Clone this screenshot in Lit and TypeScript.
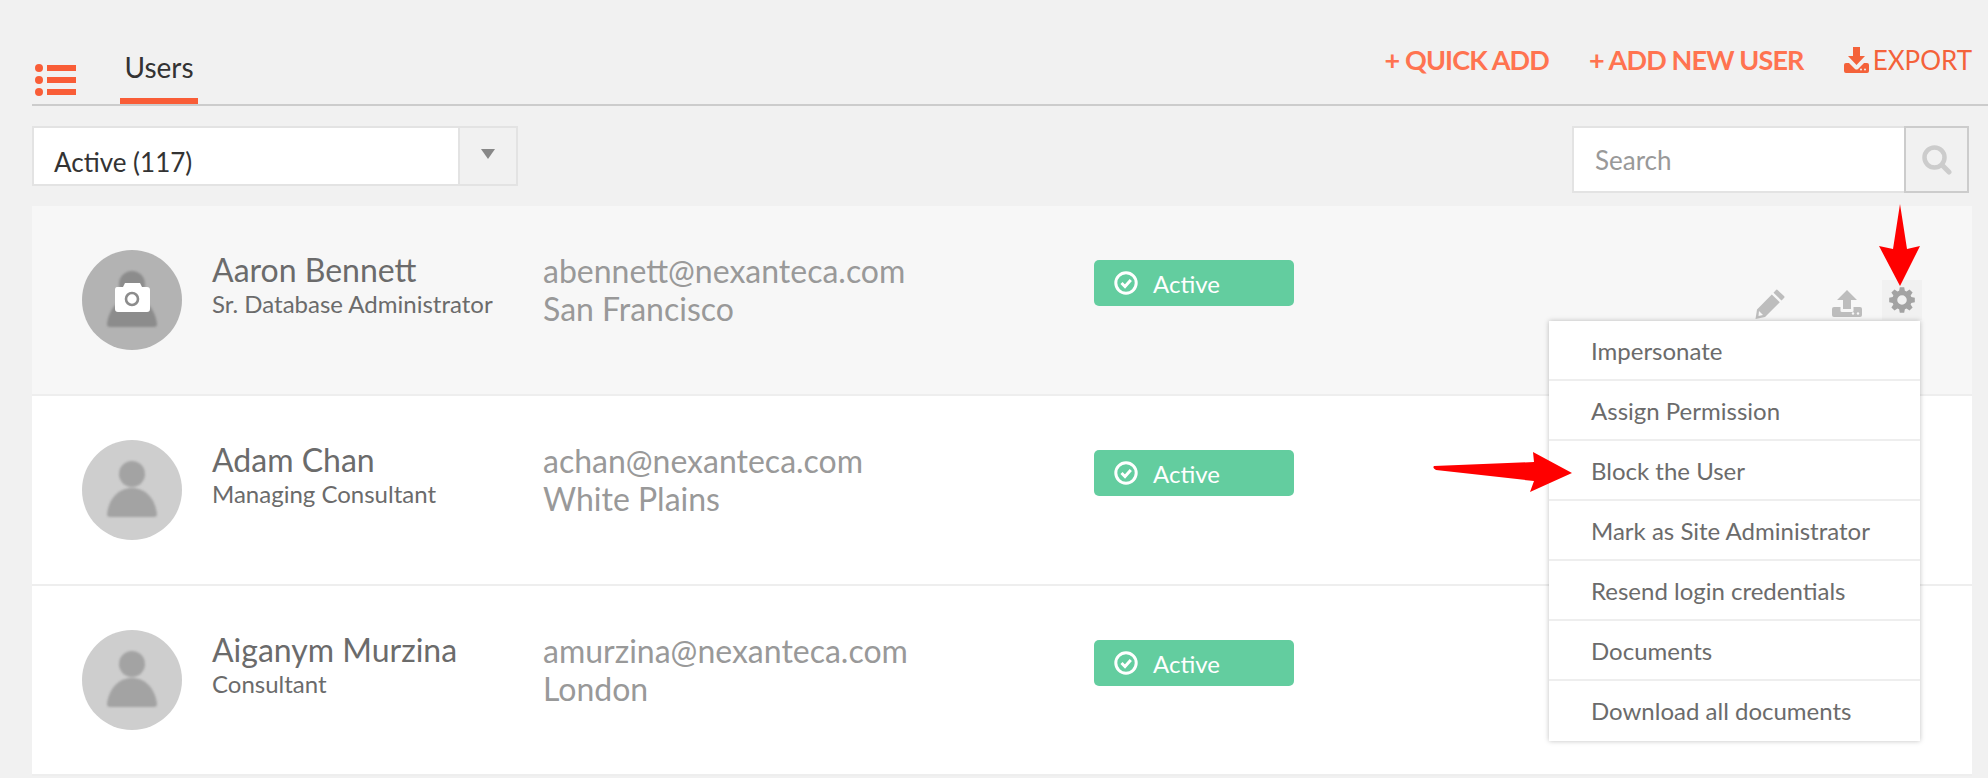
import { LitElement, html, css, svg } from "lit";
import { customElement, property } from "lit/decorators.js";

const users = [
  { name: "Aaron Bennett", role: "Sr. Database Administrator", email: "abennett@nexanteca.com", city: "San Francisco" },
  { name: "Adam Chan", role: "Managing Consultant", email: "achan@nexanteca.com", city: "White Plains" },
  { name: "Aiganym Murzina", role: "Consultant", email: "amurzina@nexanteca.com", city: "London" },
];

const menuItems = [
  "Impersonate",
  "Assign Permission",
  "Block the User",
  "Mark as Site Administrator",
  "Resend login credentials",
  "Documents",
  "Download all documents",
];

const gearPath = (() => {
  // eight teeth round a ring
  let d = "";
  const c = 12;
  for (let i = 0; i < 8; i++) {
    const a = (i * Math.PI) / 4;
    const w = 0.3;
    const p = (r: number, t: number) => `${(c + r * Math.sin(t)).toFixed(2)} ${(c - r * Math.cos(t)).toFixed(2)}`;
    d += `${i === 0 ? "M" : "L"}${p(9, a - w)} L${p(12, a - 0.17)} L${p(12, a + 0.17)} L${p(9, a + w)} `;
  }
  return d + "Z M12 7.6a4.4 4.4 0 1 0 0 8.8a4.4 4.4 0 0 0 0 -8.8Z";
})();

@customElement("user-avatar")
export class UserAvatar extends LitElement {
  static styles = css`
    :host {
      display: block;
      width: 100px;
      height: 100px;
      flex: none;
    }
    svg {
      display: block;
    }
    .person {
      filter: blur(0.8px);
    }
  `;

  @property({ type: Boolean }) hovered = false;

  render() {
    const bg = this.hovered ? "#b3b3b3" : "#cecece";
    const fg = this.hovered ? "#8c8c8c" : "#a3a3a3";
    return html`<svg width="100" height="100" viewBox="0 0 100 100">
      <circle cx="50" cy="50" r="50" fill=${bg}></circle>
      <g class="person" fill=${fg}>
        <circle cx="50" cy="34" r="13"></circle>
        <path d="M25 74 C27 58 37 48 50 48 C63 48 73 58 75 74 Q75 77 72 77 L28 77 Q25 77 25 74 Z"></path>
      </g>
      ${this.hovered
        ? svg`<path fill="#fff" d="M35 37 H41 L43 33 H58 L60 37 H65 Q68 37 68 40 V59 Q68 62 65 62 H36 Q33 62 33 59 V40 Q33 37 35 37 Z"></path>
            <circle cx="50" cy="49" r="6" fill="none" stroke="#8c8c8c" stroke-width="2.6"></circle>`
        : ""}
    </svg>`;
  }
}

@customElement("app-root")
export class AppRoot extends LitElement {
  static styles = css`
    :host {
      display: block;
      position: relative;
      min-height: 778px;
      background: #f1f1f1;
      font-family: Lato, "Noto Sans", sans-serif;
      overflow: hidden;
    }
    * {
      box-sizing: border-box;
    }
    svg {
      display: block;
    }
    .page {
      padding-left: 32px;
      padding-right: 16px;
    }
    .tabbar {
      display: flex;
      height: 106px;
      margin-right: -16px;
      padding-right: 16px;
      border-bottom: 2px solid #cccccc;
    }
    .list-icon {
      margin: 64px 0 0 3px;
      width: 42px;
      height: 32px;
    }
    .tab {
      margin-left: 43px;
      width: 78px;
      height: 104px;
      padding-top: 49px;
      border-bottom: 6px solid #f95d37;
      text-align: center;
      font-size: 28px;
      line-height: 36px;
      color: #333333;
    }
    .actions {
      display: flex;
      align-items: flex-start;
      margin-left: auto;
      padding-top: 42px;
      gap: 40px;
      font-size: 27px;
      line-height: 36px;
      letter-spacing: -0.85px;
      color: #ff7350;
      font-weight: 700;
    }
    .export {
      display: flex;
      align-items: center;
      gap: 4px;
      font-size: 26px;
      letter-spacing: 0;
      font-weight: 400;
      color: #f4623a;
    }
    .toolbar {
      display: flex;
      justify-content: space-between;
      align-items: flex-start;
      margin-top: 20px;
      margin-bottom: 13px;
      padding-right: 3px;
    }
    .select {
      display: flex;
      width: 486px;
      height: 60px;
      border: 2px solid #e3e3e3;
      background: #fff;
    }
    .select-value {
      flex: 1;
      padding: 16px 0 0 20px;
      font-size: 26px;
      line-height: 36px;
      color: #333333;
    }
    .select-caret {
      display: flex;
      align-items: center;
      justify-content: center;
      width: 58px;
      background: #f1f1f1;
      border-left: 2px solid #e3e3e3;
    }
    .caret {
      width: 0;
      height: 0;
      margin-bottom: 4px;
      border-left: 7px solid transparent;
      border-right: 7px solid transparent;
      border-top: 10px solid #888888;
    }
    .search {
      display: flex;
      height: 67px;
    }
    .search-input {
      width: 332px;
      padding: 1px 0 0 21px;
      border: 2px solid #e3e3e3;
      border-right: none;
      background: #fff;
      font-size: 26px;
      line-height: 63px;
      color: #999999;
    }
    .search-btn {
      display: flex;
      align-items: center;
      justify-content: center;
      width: 65px;
      border: 2px solid #cccccc;
    }
    .row {
      display: flex;
      position: relative;
      height: 190px;
      padding: 44px 0 0 50px;
      background: #fff;
      border-bottom: 2px solid #eeeeee;
    }
    .row.hovered {
      background: #f7f7f7;
    }
    .who {
      width: 331px;
      margin-left: 30px;
      padding-top: 2px;
      flex: none;
    }
    .name {
      font-size: 32px;
      line-height: 36px;
      color: #6b6b6b;
    }
    .role {
      font-size: 24px;
      line-height: 32px;
      color: #6b6b6b;
    }
    .contact {
      width: 551px;
      padding-top: 3px;
      flex: none;
      color: #999999;
    }
    .email {
      font-size: 32px;
      line-height: 36px;
    }
    .city {
      font-size: 32px;
      line-height: 40px;
    }
    .badge {
      display: flex;
      align-items: center;
      gap: 15px;
      width: 200px;
      height: 46px;
      margin-top: 10px;
      padding-left: 20px;
      border-radius: 5px;
      background: #63cd9f;
      font-size: 24px;
      color: #fff;
    }
    .row-icons {
      display: flex;
      position: absolute;
      top: 74px;
      right: 50px;
    }
    .gear-box {
      display: flex;
      align-items: center;
      justify-content: center;
      width: 40px;
      height: 40px;
      background: #f1f1f1;
    }
    .gear {
      filter: blur(0.5px);
    }
    .menu {
      position: absolute;
      top: 115px;
      right: 52px;
      width: 371px;
      background: #fff;
      box-shadow: 0 0 5px rgba(0, 0, 0, 0.25);
      z-index: 2;
    }
    .menu-item {
      height: 60px;
      padding: 2px 0 0 42px;
      border-bottom: 2px solid #eeeeee;
      font-size: 24px;
      line-height: 56px;
      color: #6b6b6b;
    }
    .menu-item:last-child {
      border-bottom: none;
    }
    .arrow {
      position: absolute;
      top: 0;
      left: 0;
      z-index: 3;
      pointer-events: none;
    }
  `;

  private renderIcons() {
    return html`<div class="row-icons">
        <svg width="32" height="32" viewBox="0 0 32 32" style="margin: 8px 45px 0 0">
          <path fill="#bdbdbd" d="M23 1.5 L30 8 Q31 9 30 10 L27.5 12.5 L19.5 4.8 L22 2 Q22.5 1.2 23 1.5 Z M17.8 6.5 L25.8 14.2 L11 29 L1.5 31 L3 21.5 Z"></path>
          <path fill="#f7f7f7" d="M5 23 L9 27 L4.5 28 Z"></path>
        </svg>
        <svg width="32" height="30" viewBox="0 0 32 30" style="margin: 9px 19px 0 0">
          <path fill="#bdbdbd" d="M16 1 L26 11 H20 V20 H12 V11 H6 Z M1 20 Q1 18 3 18 H9.5 V22 Q9.5 23 11 23 H21 Q22.5 23 22.5 22 V18 H29 Q31 18 31 20 V26 Q31 28 29 28 H3 Q1 28 1 26 Z"></path>
          <circle cx="22" cy="24.5" r="1.2" fill="#f7f7f7"></circle>
          <circle cx="27" cy="24.5" r="1.2" fill="#f7f7f7"></circle>
        </svg>
        <div class="gear-box">
          <svg class="gear" width="26" height="26" viewBox="0 0 24 24">
            <path fill="#a3a3a3" fill-rule="evenodd" d=${gearPath}></path>
          </svg>
        </div>
      </div>
      <div class="menu">
        ${menuItems.map((item) => html`<div class="menu-item">${item}</div>`)}
      </div>`;
  }

  render() {
    return html`
      <div class="page">
        <div class="tabbar">
          <svg class="list-icon" viewBox="0 0 42 32">
            <g fill="#f95d37">
              <circle cx="4" cy="4" r="4"></circle>
              <circle cx="4" cy="16" r="4"></circle>
              <circle cx="4" cy="28" r="4"></circle>
              <rect x="12" y="1" width="29" height="6"></rect>
              <rect x="12" y="13" width="29" height="6"></rect>
              <rect x="12" y="25" width="29" height="6"></rect>
            </g>
          </svg>
          <div class="tab">Users</div>
          <div class="actions">
            <span>+ QUICK ADD</span>
            <span>+ ADD NEW USER</span>
            <span class="export">
              <svg width="25" height="26" viewBox="0 0 25 26">
                <path fill="#f4623a" d="M9 0 H16 V9 H21 L12.5 18 L4 9 H9 Z M0 18 Q0 16 2 16 H5 L11 22 Q12.5 23 14 22 L20 16 H23 Q25 16 25 18 V24 Q25 26 23 26 H2 Q0 26 0 24 Z"></path>
                <circle cx="17" cy="22.5" r="1" fill="#f1f1f1"></circle>
                <circle cx="21" cy="22.5" r="1" fill="#f1f1f1"></circle>
              </svg>
              EXPORT
            </span>
          </div>
        </div>

        <div class="toolbar">
          <div class="select">
            <div class="select-value">Active (117)</div>
            <div class="select-caret"><div class="caret"></div></div>
          </div>
          <div class="search">
            <div class="search-input">Search</div>
            <div class="search-btn">
              <svg width="30" height="30" viewBox="0 0 30 30">
                <circle cx="12.5" cy="12.5" r="10" fill="none" stroke="#cccccc" stroke-width="4.5"></circle>
                <path d="M20 20 L27 27" stroke="#cccccc" stroke-width="5" stroke-linecap="round"></path>
              </svg>
            </div>
          </div>
        </div>

        ${users.map(
          (u, i) => html`<div class="row ${i === 0 ? "hovered" : ""}">
            <user-avatar ?hovered=${i === 0}></user-avatar>
            <div class="who">
              <div class="name">${u.name}</div>
              <div class="role">${u.role}</div>
            </div>
            <div class="contact">
              <div class="email">${u.email}</div>
              <div class="city">${u.city}</div>
            </div>
            <div class="badge">
              <svg width="24" height="24" viewBox="0 0 24 24">
                <circle cx="12" cy="12" r="10.2" fill="none" stroke="#fff" stroke-width="3"></circle>
                <path d="M7.5 12 L11 15.5 L16.8 9" fill="none" stroke="#fff" stroke-width="3"></path>
              </svg>
              Active
            </div>
            ${i === 0 ? this.renderIcons() : ""}
          </div>`
        )}
      </div>

      <svg class="arrow" width="1988" height="778" viewBox="0 0 1988 778">
        <path fill="#ff0000" d="M1900 204 L1907 249 L1920 246 L1900 286 L1879 246 L1893 249 Z"></path>
        <path fill="#ff0000" d="M1434 466 L1534 462 L1533 452 L1572 473 L1530 492 L1534 481 L1436 470 Q1432 468 1434 466 Z"></path>
      </svg>
    `;
  }
}
